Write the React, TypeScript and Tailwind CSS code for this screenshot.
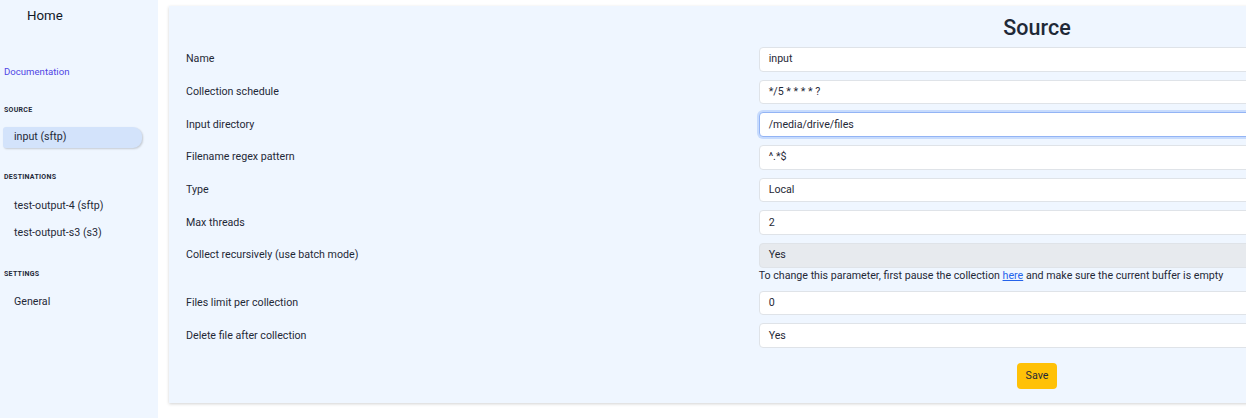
import React from "react";

const rows: { label: string; value: string; focused?: boolean; disabled?: boolean; help?: boolean }[] = [
  { label: "Name", value: "input" },
  { label: "Collection schedule", value: "*/5 * * * * ?" },
  { label: "Input directory", value: "/media/drive/files", focused: true },
  { label: "Filename regex pattern", value: "^.*$" },
  { label: "Type", value: "Local" },
  { label: "Max threads", value: "2" },
  { label: "Collect recursively (use batch mode)", value: "Yes", disabled: true, help: true },
  { label: "Files limit per collection", value: "0" },
  { label: "Delete file after collection", value: "Yes" },
];

function NavItem({ children, active }: { children: React.ReactNode; active?: boolean }) {
  return (
    <div
      className={
        active
          ? "ml-[3px] w-[139px] h-[21px] flex items-center pl-[11px] text-[10.67px] text-[#1f2937] bg-[#d3e3fb] rounded-l-[3px] rounded-r-[9px] shadow-[1px_1px_2px_rgba(0,0,0,0.18)]"
          : "ml-[3px] h-[21px] flex items-center pl-[11px] text-[10.67px] text-[#1f2937]"
      }
    >
      {children}
    </div>
  );
}

function Section({ children }: { children: React.ReactNode }) {
  return <div className="pl-[4px] text-[7px] font-bold tracking-[0.04em] text-[#1f2937] uppercase">{children}</div>;
}

export default function App() {
  return (
    <div
      className="w-[1246px] h-[418px] overflow-hidden flex bg-white"
      style={{ fontFamily: "Roboto, 'Liberation Sans', sans-serif" }}
    >
      <aside className="w-[158px] shrink-0 h-full bg-[#eff6ff] flex flex-col">
        <div className="pl-[27px] pt-[7px] text-[13.3px] leading-[18px] text-[#111827]">Home</div>
        <div className="mt-[41px] pl-[4px] text-[9.6px] leading-[12px] text-[#4f46e5]">Documentation</div>
        <div className="mt-[27px]">
          <Section>Source</Section>
        </div>
        <div className="mt-[11px]">
          <NavItem active>input (sftp)</NavItem>
        </div>
        <div className="mt-[24px]">
          <Section>Destinations</Section>
        </div>
        <div className="mt-[13px] flex flex-col gap-[6px]">
          <NavItem>test-output-4 (sftp)</NavItem>
          <NavItem>test-output-s3 (s3)</NavItem>
        </div>
        <div className="mt-[26px]">
          <Section>Settings</Section>
        </div>
        <div className="mt-[12px]">
          <NavItem>General</NavItem>
        </div>
      </aside>
      <main className="pl-[11px] pt-[6px] shrink-0">
        <div className="w-[1736px] h-[397px] bg-[#eff6ff] shadow-[0_1px_3px_rgba(0,0,0,0.18)] px-[17px] pt-[8px]">
          <h1 className="text-center text-[21.5px] leading-[28px] font-medium text-[#1f2937]">Source</h1>
          <div className="mt-[5px] flex flex-col gap-[8px]">
            {rows.map((r) => (
              <div key={r.label} className="grid grid-cols-3 gap-x-4">
                <div className="h-[24.67px] flex items-center text-[10.67px] text-[#1f2937]">{r.label}</div>
                <div className="col-span-2">
                  <div
                    className={
                      "h-[24.67px] flex items-center pl-[9px] text-[10.67px] text-[#1f2937] rounded-[4px] border " +
                      (r.focused
                        ? "bg-white border-[#93b4f5] ring-2 ring-[#c7dbfd]"
                        : r.disabled
                        ? "bg-[#e7eaee] border-[#dfe3e8]"
                        : "bg-white border-[#dfe3e8]")
                    }
                  >
                    {r.value}
                  </div>
                  {r.help && (
                    <div className="pt-[1px] text-[10.67px] leading-[14px] text-[#1f2937]">
                      To change this parameter, first pause the collection{" "}
                      <a className="text-[#2563eb] underline">here</a> and make sure the current buffer is empty
                    </div>
                  )}
                </div>
              </div>
            ))}
          </div>
          <div className="mt-[15px] flex justify-center">
            <button className="w-[40px] h-[26px] rounded-[4px] bg-[#ffc107] text-[10.67px] text-[#1f2937]">Save</button>
          </div>
        </div>
      </main>
    </div>
  );
}
